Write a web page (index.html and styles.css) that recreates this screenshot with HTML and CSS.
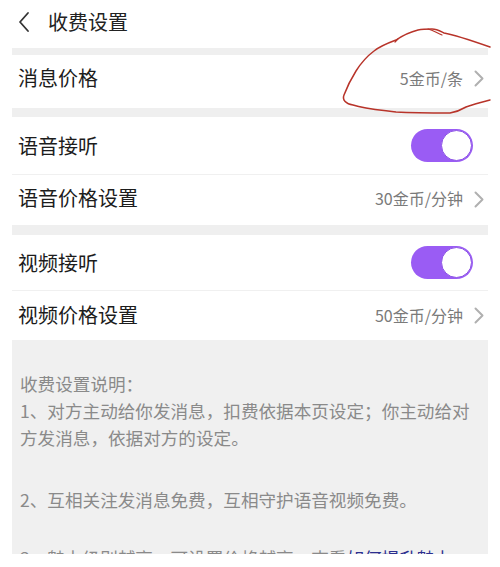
FILE: index.html
```html
<!DOCTYPE html>
<html lang="zh-CN">
<head>
<meta charset="utf-8">
<title>收费设置</title>
<link rel="stylesheet" href="styles.css">
</head>
<body>
<div class="page">
  <header class="topbar">
    <svg class="back" width="12" height="22" viewBox="0 0 12 22"><path d="M10 2 L2 11 L10 20" fill="none" stroke="#333" stroke-width="1.8" stroke-linecap="round" stroke-linejoin="round"/></svg>
    <h1 class="title">收费设置</h1>
  </header>
  <div class="band band-1"></div>
  <div class="row row-msg">
    <span class="label">消息价格</span>
    <span class="value">5金币/条<svg class="chev" width="10" height="17" viewBox="0 0 10 17"><path d="M1.5 1.5 L8.5 8.5 L1.5 15.5" fill="none" stroke="#b0b0b0" stroke-width="2" stroke-linecap="round" stroke-linejoin="round"/></svg></span>
  </div>
  <div class="band band-2"></div>
  <div class="row row-voice divided">
    <span class="label">语音接听</span>
    <span class="toggle"><span class="knob"></span></span>
  </div>
  <div class="row row-voice-price">
    <span class="label">语音价格设置</span>
    <span class="value">30金币/分钟<svg class="chev" width="10" height="17" viewBox="0 0 10 17"><path d="M1.5 1.5 L8.5 8.5 L1.5 15.5" fill="none" stroke="#b0b0b0" stroke-width="2" stroke-linecap="round" stroke-linejoin="round"/></svg></span>
  </div>
  <div class="band band-3"></div>
  <div class="row row-video divided">
    <span class="label">视频接听</span>
    <span class="toggle"><span class="knob"></span></span>
  </div>
  <div class="row row-video-price">
    <span class="label">视频价格设置</span>
    <span class="value">50金币/分钟<svg class="chev" width="10" height="17" viewBox="0 0 10 17"><path d="M1.5 1.5 L8.5 8.5 L1.5 15.5" fill="none" stroke="#b0b0b0" stroke-width="2" stroke-linecap="round" stroke-linejoin="round"/></svg></span>
  </div>
  <section class="notes">
    <p class="note-head">收费设置说明：</p>
    <p class="note">1、对方主动给你发消息，扣费依据本页设定；你主动给对方发消息，依据对方的设定。</p>
    <p class="note gap">2、互相关注发消息免费，互相守护语音视频免费。</p>
    <p class="note gap last">3、魅力级别越高，可设置价格越高，查看<span class="link">如何提升魅力</span></p>
  </section>
</div>
<svg class="scribble" width="500" height="567" viewBox="0 0 500 567">
  <path d="M490 47 C470 40 455 35 444 33 C440 31 437 29 432 29 C426 29 423 29 418 30 C410 32 402 36 396 40 C388 43 380 46 374 51 C366 57 361 63 356 71 C351 79 347 87 344 95 C342 100 346 104 353 105 C365 109 380 110 396 112 C415 113 432 113 450 113 C456 112 461 110 466 107 C474 104 482 102 490 100" fill="none" stroke="#b8342a" stroke-width="1.5" stroke-linecap="round"/>
  <path d="M428 29 C433 30 437 33 442 35" fill="none" stroke="#b8342a" stroke-width="1.2" stroke-linecap="round"/>
  <path d="M398 39 L395 42" fill="none" stroke="#b8342a" stroke-width="1.2" stroke-linecap="round"/>
</svg>
</body>
</html>
```

FILE: styles.css
```css
html, body {
  margin: 0;
  padding: 0;
  background: #ffffff;
}
body {
  width: 500px;
  height: 567px;
  overflow: hidden;
  position: relative;
  font-family: "Noto Sans CJK SC", "Noto Sans", sans-serif;
  color: #1c1c1c;
}
.page {
  width: 476px;
  margin-left: 12px;
}
.topbar {
  height: 48px;
  display: flex;
  align-items: center;
  padding-left: 6px;
  box-sizing: border-box;
}
.back {
  display: block;
  margin-top: -4px;
}
.title {
  margin: 0 0 0 18px;
  font-size: 20px;
  font-weight: 400;
  color: #222;
  line-height: 1;
  margin-top: -4px;
}
.band {
  background: #efefef;
}
.band-1 { height: 7px; }
.band-2 { height: 9px; }
.band-3 { height: 10px; }
.row {
  display: flex;
  align-items: center;
  justify-content: space-between;
  padding-left: 6px;
  padding-right: 4px;
  box-sizing: border-box;
}
.row.divided {
  border-bottom: 1px solid #f0f0f0;
}
.row-msg { height: 53px; padding-bottom: 8px; }
.row-voice { height: 58px; }
.row-voice-price { height: 50px; padding-bottom: 4px; }
.row-video { height: 56px; }
.row-video-price { height: 49px; padding-bottom: 2px; }
.label {
  font-size: 20px;
  line-height: 1;
  color: #1c1c1c;
}
.value {
  display: flex;
  align-items: center;
  font-size: 16px;
  line-height: 1;
  color: #7a7a7a;
}
.chev {
  display: block;
  margin-left: 11px;
  margin-top: 2px;
}
.toggle {
  width: 62px;
  height: 33px;
  border-radius: 17px;
  background: #9a5cf4;
  position: relative;
  margin-right: 11px;
  flex: none;
}
.knob {
  position: absolute;
  right: 1px;
  top: 1px;
  width: 29px;
  height: 29px;
  border-radius: 50%;
  background: #fff;
  border: 1px solid #8e55e6;
}
.notes {
  background: #f0f0f0;
  height: 214px;
  overflow: hidden;
  padding: 30px 2px 0 8px;
  box-sizing: border-box;
  margin-top: 0;
}
.notes p {
  margin: 0;
  font-size: 17.6px;
  line-height: 27px;
  color: #8a8a8a;
}
.note-head {
  margin-bottom: 0;
}
.note.gap {
  margin-top: 35px;
}
.note.gap.last {
  margin-top: 31px;
}
.link {
  color: #2b2f8f;
}
.scribble {
  position: absolute;
  left: 0;
  top: 0;
  pointer-events: none;
}
```
